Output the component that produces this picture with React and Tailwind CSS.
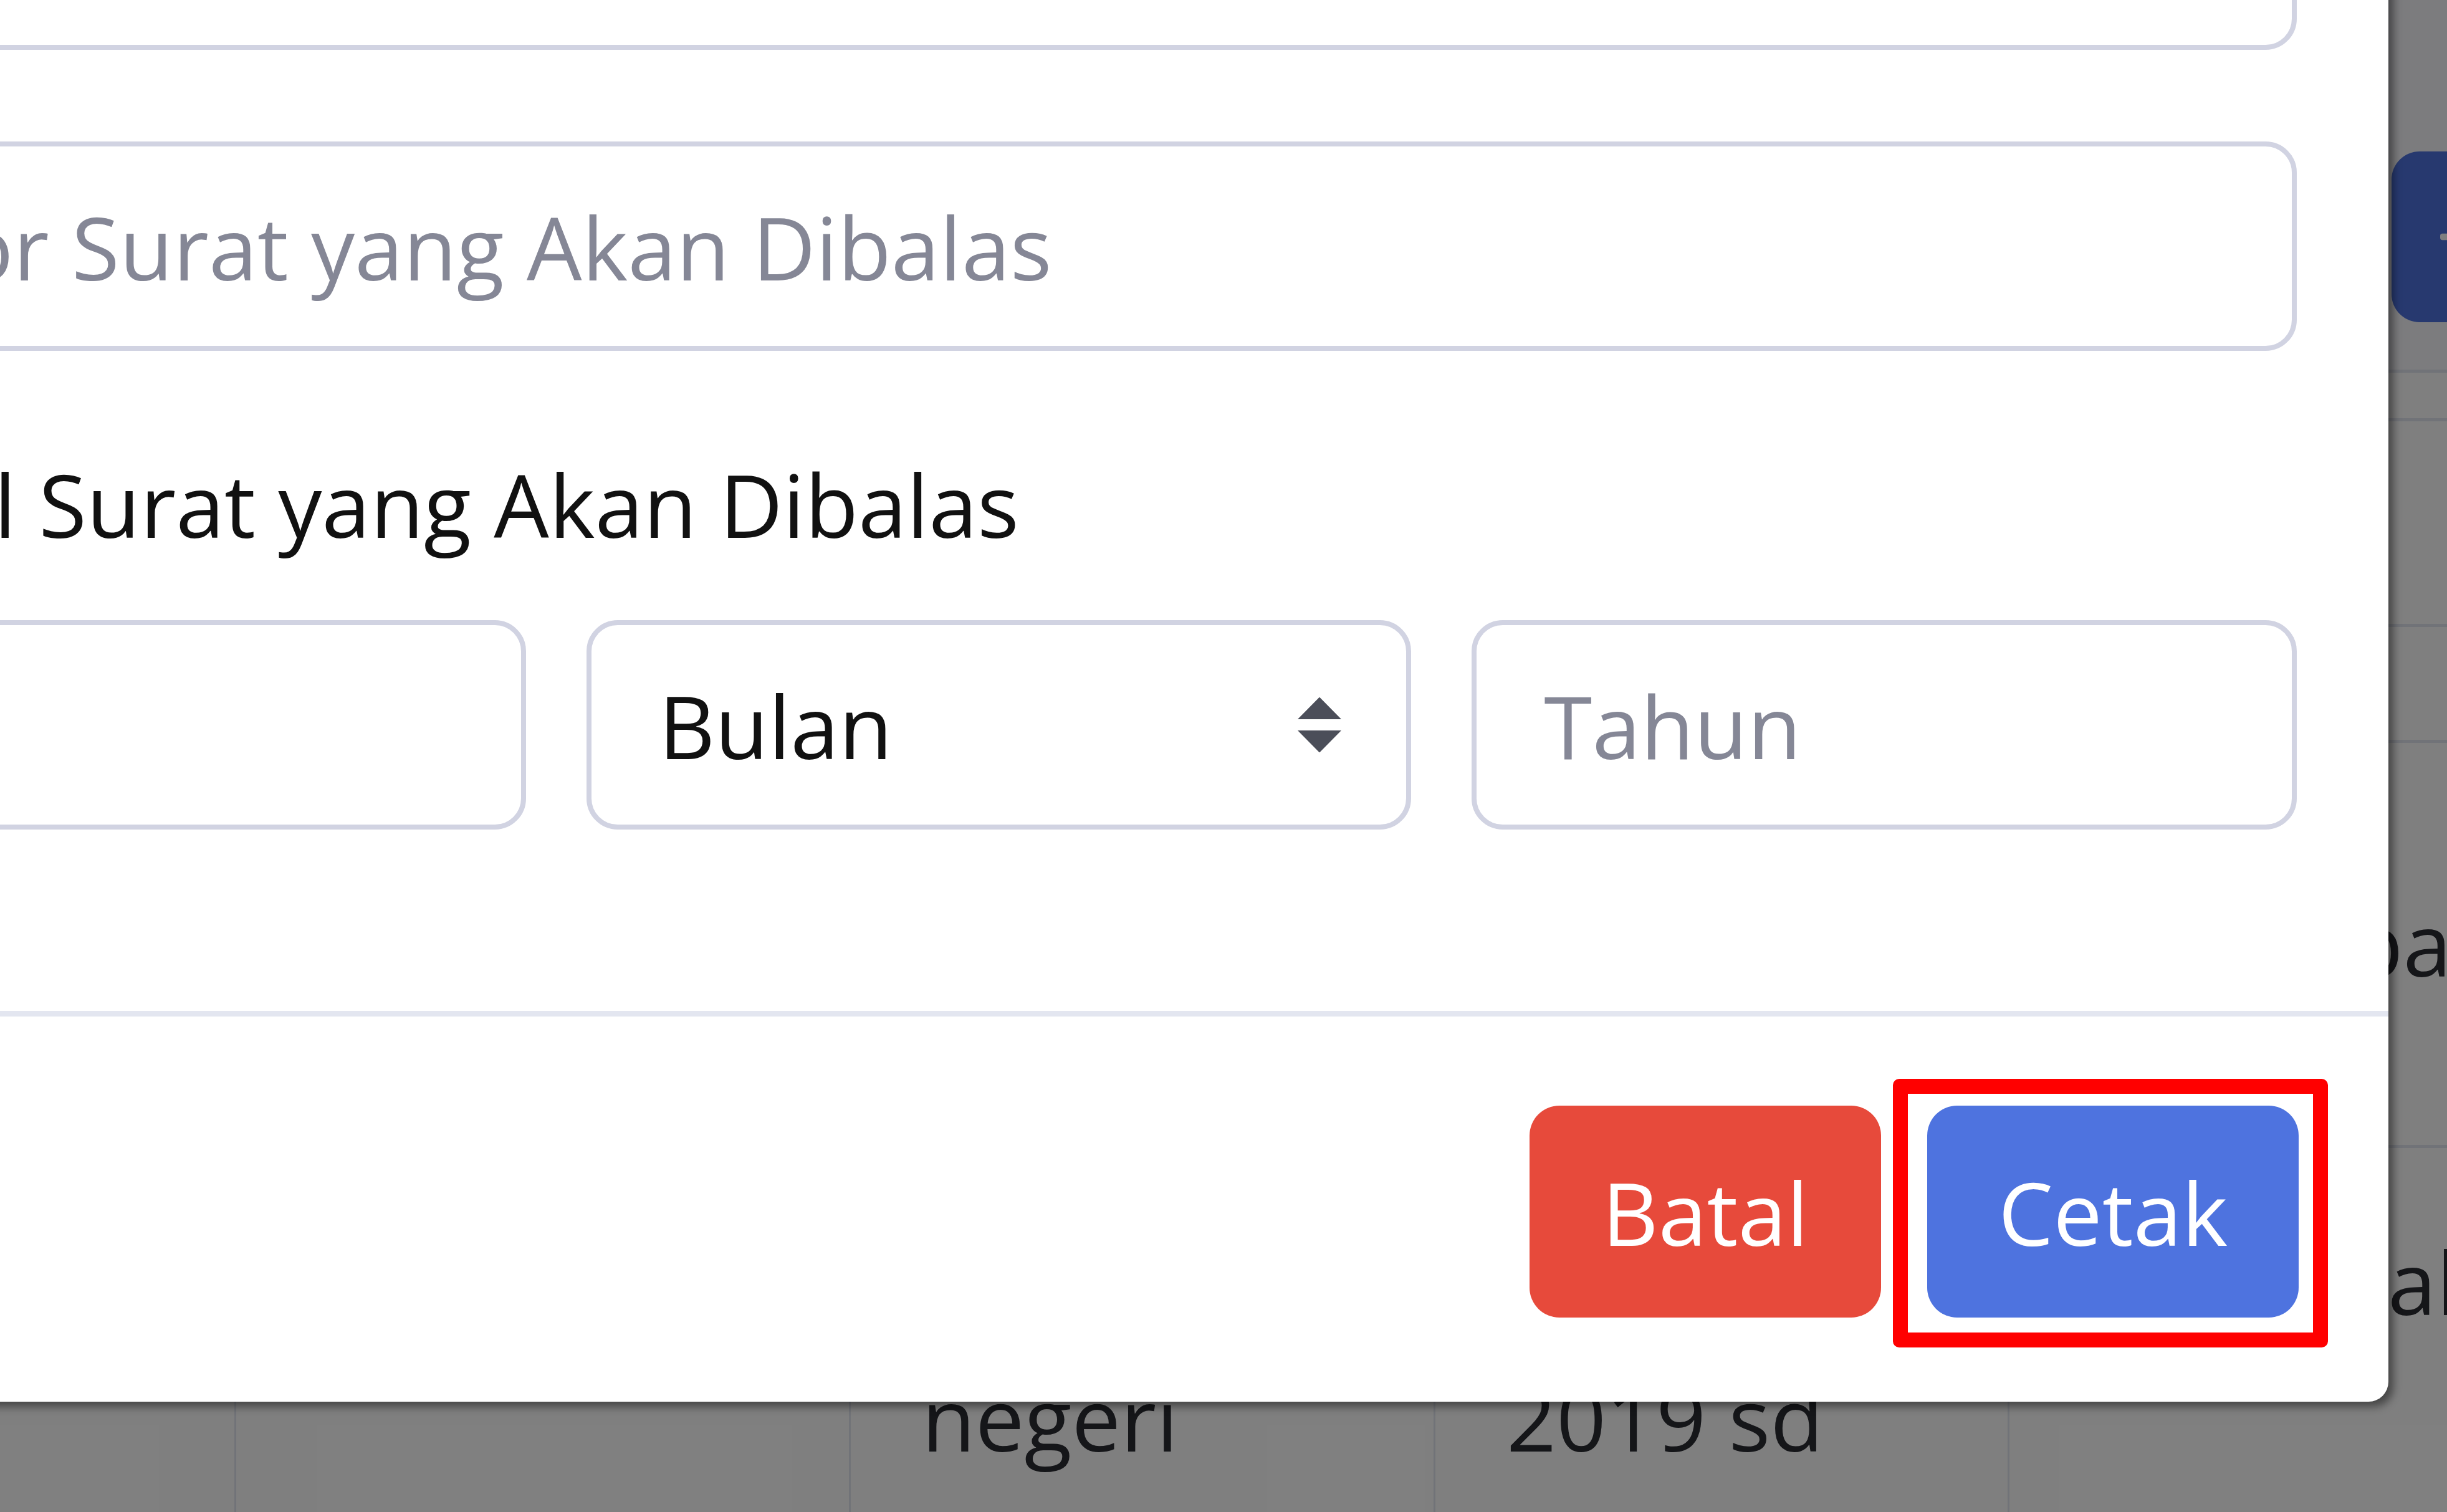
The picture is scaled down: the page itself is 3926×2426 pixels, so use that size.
import React from 'react';
import { FaPlus } from 'react-icons/fa';

// Page behind the dialog: card header with an add button and a table
function BackgroundPage() {
    return (
        <div className="flex flex-col text-[#2b2c33]">
            <div className="h-[598px] bg-[#f8f9fc] border-b-[5px] border-[#e3e6f0] pt-[243px] pl-[3837px]">
                <button className="flex items-center gap-[40px] w-[700px] h-[274px] pl-[78px] rounded-[45px] bg-[#4e73df] text-white">
                    <FaPlus size={150} />
                    <span>Tambah</span>
                </button>
            </div>
            <div className="h-[78px] border-b-[5px] border-[#e3e6f0]" />

            {/* Table */}
            <div className="grid grid-cols-[376px_986px_938px_921px_1fr] h-[330px] border-b-[5px] border-[#e3e6f0] font-bold">
                <div className="px-[114px] pt-[60px]">No</div>
                <div className="px-[114px] pt-[60px] border-l-[3px] border-[#e3e6f0]">Perihal</div>
                <div className="px-[114px] pt-[60px] border-l-[3px] border-[#e3e6f0]">Tujuan</div>
                <div className="px-[114px] pt-[60px] border-l-[3px] border-[#e3e6f0]">Waktu</div>
                <div className="px-[114px] pt-[60px] border-l-[3px] border-[#e3e6f0]">Status</div>
            </div>
            <div className="grid grid-cols-[376px_986px_938px_921px_1fr] h-[186px] border-b-[5px] border-[#e3e6f0]">
                <div />
                <div className="border-l-[3px] border-[#e3e6f0]" />
                <div className="border-l-[3px] border-[#e3e6f0]" />
                <div className="border-l-[3px] border-[#e3e6f0]" />
                <div className="border-l-[3px] border-[#e3e6f0]" />
            </div>
            <div className="grid grid-cols-[376px_986px_938px_921px_1fr] h-[650px] border-b-[5px] border-[#e3e6f0]">
                <div className="px-[114px] pt-[211px]">1</div>
                <div className="px-[114px] pt-[211px] border-l-[3px] border-[#e3e6f0]">Undangan</div>
                <div className="px-[114px] pt-[211px] border-l-[3px] border-[#e3e6f0]">Dinas</div>
                <div className="px-[114px] pt-[211px] border-l-[3px] border-[#e3e6f0]">2020</div>
                <div className="pl-[409px] pt-[211px] border-l-[3px] border-[#e3e6f0] whitespace-nowrap">Dibalas</div>
            </div>
            <div className="grid grid-cols-[376px_986px_938px_921px_1fr] h-[584px]">
                <div className="px-[114px] pt-[104px]">2</div>
                <div className="px-[114px] pt-[104px] border-l-[3px] border-[#e3e6f0]">Izin</div>
                <div className="px-[114px] pt-[104px] border-l-[3px] border-[#e3e6f0]">
                    <span className="block">Kunjungan</span>
                    <span className="block">negeri</span>
                </div>
                <div className="px-[114px] pt-[104px] border-l-[3px] border-[#e3e6f0]">
                    <span className="block">Periode</span>
                    <span className="block">2019 sd</span>
                </div>
                <div className="pl-[409px] pt-[104px] border-l-[3px] border-[#e3e6f0] whitespace-nowrap">Tidak</div>
            </div>
        </div>
    );
}

const fieldCls =
    'w-full h-[336px] pr-[104px] bg-white border-[8px] border-[#d1d3e2] rounded-[50px] text-[#111] placeholder:text-[#858796] outline-none';

function PrintModal() {
    return (
        <div className="absolute left-[-619px] top-[-395px] w-[4451px] bg-white rounded-[32px] shadow-[8px_8px_14px_rgba(0,0,0,0.45)]">
            {/* Body */}
            <div className="pt-[139px] pl-[139px] pr-[147px] pb-[291px]">
                <input className={fieldCls + ' pl-[108px]'} />
                <input className={fieldCls + ' pl-[90px] mt-[147px]'} placeholder="Nomor Surat yang Akan Dibalas" />
                <label className="block mt-[136px] text-[#111]">Tanggal Surat yang Akan Dibalas</label>
                <div className="mt-[77px] grid grid-cols-3 gap-x-[97px]">
                    <input className={fieldCls + ' pl-[108px]'} placeholder="Tgl" />
                    <div className="relative">
                        <select className={fieldCls + ' pl-[108px] appearance-none'} defaultValue="">
                            <option value="">Bulan</option>
                            <option value="1">Januari</option>
                        </select>
                        <svg
                            className="absolute right-[112px] top-1/2 -translate-y-1/2 w-[70px] h-[89px] pointer-events-none"
                            viewBox="0 0 4 5"
                            preserveAspectRatio="none"
                        >
                            <path d="M2 0L0 2h4zm0 5L0 3h4z" fill="#4b4e59" />
                        </svg>
                    </div>
                    <input className={fieldCls + ' pl-[108px]'} placeholder="Tahun" />
                </div>
            </div>

            {/* Footer */}
            <div className="flex justify-end gap-[74px] border-t-[9px] border-[#e3e6f0] pt-[143px] pb-[135px] pr-[144px]">
                <button className="flex items-center justify-center w-[564px] h-[340px] rounded-[48px] bg-[#e74a3b] text-white">
                    Batal
                </button>
                <div className="relative">
                    <button className="flex items-center justify-center w-[596px] h-[340px] rounded-[48px] bg-[#4e73df] text-white">
                        Cetak
                    </button>
                    <span className="absolute -left-[55px] -right-[47px] -top-[43px] -bottom-[48px] border-[24px] border-[#ff0000] rounded-[10px] pointer-events-none" />
                </div>
            </div>
        </div>
    );
}

export default function App() {
    return (
        <div className="relative w-[3926px] h-[2426px] overflow-hidden bg-white font-['Open_Sans',sans-serif] text-[140px] leading-[219px]">
            <BackgroundPage />
            {/* Backdrop */}
            <div className="absolute inset-0 bg-black/50" />
            <PrintModal />
        </div>
    );
}
